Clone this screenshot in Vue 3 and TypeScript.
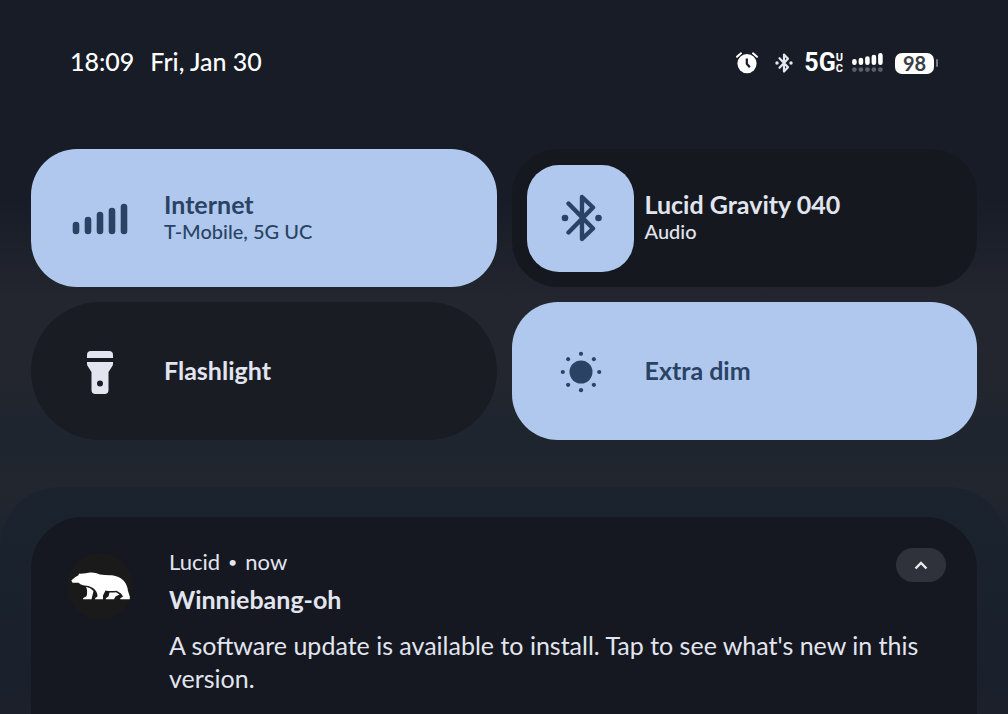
<script setup lang="ts">
import { ref } from 'vue'

interface Tile {
  id: 'internet' | 'bluetooth' | 'flashlight' | 'dim'
  title: string
  detail?: string
  on: boolean
}

const tiles = ref<Tile[]>([
  { id: 'internet', title: 'Internet', detail: 'T-Mobile, 5G UC', on: true },
  { id: 'bluetooth', title: 'Lucid Gravity 040', detail: 'Audio', on: false },
  { id: 'flashlight', title: 'Flashlight', on: false },
  { id: 'dim', title: 'Extra dim', on: true },
])

const rays = [0, 45, 90, 135, 180, 225, 270, 315]
const expanded = ref(true)
</script>

<template>
  <main class="shade">
    <header class="status">
      <div class="clock">
        <time>18:09</time>
        <span>Fri, Jan 30</span>
      </div>
      <div class="indicators">
        <svg class="alarm" width="24" height="24" viewBox="0 0 24 24" aria-label="Alarm set">
          <circle cx="12" cy="12.6" r="9.6" fill="#fff" />
          <path d="M2 5.800 6 2.300M22 5.800 18 2.300" stroke="#fff" stroke-width="2" stroke-linecap="round" />
          <path d="M11.800 7.500v5.300l3 3.400" fill="none" stroke="#171c26" stroke-width="2.200" />
        </svg>
        <svg class="bt" width="18" height="22" viewBox="0 0 18 22" aria-label="Bluetooth connected">
          <path d="M4.500 6.200 13 15.200 9 19.500V2.500l4 4.300-8.500 9" fill="none" stroke="#e6e8ee" stroke-width="2.200" stroke-linejoin="round" stroke-linecap="round" />
          <circle cx="2" cy="11" r="1.700" fill="#e6e8ee" />
          <circle cx="16" cy="11" r="1.700" fill="#e6e8ee" />
        </svg>
        <span class="network"><span class="gen">5G</span><span class="uc"><span>U</span><span>C</span></span></span>
        <svg class="bars" width="31" height="20" viewBox="0 0 31 20" aria-label="Signal strength">
          <path d="M2.400 8.300v1.500M8.900 7v2.800M15.400 5.500v4.300M21.900 4v5.800M28.400 2.400v7.400" stroke="#fff" stroke-width="4.600" stroke-linecap="round" />
          <g fill="#5b5f68">
            <circle v-for="n in 5" :key="n" :cx="2.4 + (n - 1) * 6.5" cy="16.6" r="2.4" />
          </g>
        </svg>
        <span class="battery">98</span>
      </div>
    </header>

    <section class="tiles" aria-label="Quick settings">
      <button
        v-for="tile in tiles"
        :key="tile.id"
        type="button"
        class="tile"
        :class="[tile.id, { on: tile.on }]"
        :aria-pressed="tile.on"
      >
        <span class="icon">
          <svg v-if="tile.id === 'internet'" width="56" height="34" viewBox="0 0 56 34" aria-hidden="true">
            <path d="M4 24v6M16 19v11M28 14v16M40 10v20M52 6v24" stroke="currentColor" stroke-width="6.600" stroke-linecap="round" />
          </svg>
          <svg v-else-if="tile.id === 'bluetooth'" width="44" height="48" viewBox="0 0 44 48" aria-hidden="true">
            <path d="M10.500 9.500 35 34.500 24 45V3L35 13.500 10.500 38.500" fill="none" stroke="currentColor" stroke-width="4.400" stroke-linejoin="round" stroke-linecap="round" />
            <circle cx="7" cy="24" r="3.300" fill="currentColor" />
            <circle cx="40.500" cy="24" r="3.300" fill="currentColor" />
          </svg>
          <svg v-else-if="tile.id === 'flashlight'" width="26" height="45" viewBox="0 -2 26 45" aria-hidden="true">
            <path d="M0 7V4a4 4 0 0 1 4-4h18a4 4 0 0 1 4 4v3z" fill="currentColor" />
            <path fill-rule="evenodd" d="M0 11h26v2q0 1-.6 2L21.500 21v18a4 4 0 0 1-4 4h-9a4 4 0 0 1-4-4V21L.6 15Q0 14 0 13zM13 29.500a3 3 0 1 0 0 6 3 3 0 0 0 0-6z" fill="currentColor" />
          </svg>
          <svg v-else width="43" height="43" viewBox="-22 -22 43 43" aria-hidden="true">
            <circle r="11.500" fill="currentColor" />
            <circle v-for="a in rays" :key="a" cy="-18.200" r="2.100" :transform="`rotate(${a})`" fill="currentColor" />
          </svg>
        </span>
        <span class="label">
          <span class="title">{{ tile.title }}</span>
          <span v-if="tile.detail" class="detail">{{ tile.detail }}</span>
        </span>
      </button>
    </section>

    <section class="drawer" aria-label="Notifications">
      <article class="note">
        <span class="avatar">
          <svg width="60" height="30" viewBox="0 0 60 30" aria-hidden="true">
            <g fill="#fff">
              <path d="M1.300 9.500 5 6.200 8.500 4.200Q8.600 1.800 10.800 2.800Q16 2.400 20 1.500Q25 1 30 3.500Q36 4.400 42 4.200Q49 5 53.500 9.500Q57.500 14 58 20L59.800 25.500V28.300H50.200L50.500 27 53 25.800Q52 22.500 46.500 19.800Q40 20.500 35.500 19.500L33 24.500V28.300H25L25.300 27 27.500 25.500Q27.500 20 23 17Q19 14.300 13 14.200Q10 13.500 8.500 11.800L2.500 11.800Z" />
              <path d="M16 15.800Q20.500 16.500 23.500 20L21.500 28.300H13L13.300 27 16.500 25.200Q18 20 16 15.800Z" />
              <path d="M39.500 21.500Q43.500 21.800 46 21.200L49.500 23.500 45.500 25.500 44 28.300H35.800L36 27 38.500 25.500Z" />
            </g>
          </svg>
        </span>
        <div class="body">
          <p class="meta"><span>Lucid</span><span class="dot">•</span><time>now</time></p>
          <h2>Winniebang-oh</h2>
          <p class="text">A software update is available to install. Tap to see what's new in this version.</p>
        </div>
        <button type="button" class="collapse" aria-label="Collapse" :aria-expanded="expanded" @click="expanded = !expanded">
          <svg width="14" height="9" viewBox="0 0 14 9" aria-hidden="true">
            <path d="M1.500 7.500 7 2l5.500 5.500" fill="none" stroke="#e8eaf0" stroke-width="2.400" />
          </svg>
        </button>
      </article>
    </section>
  </main>
</template>

<style>
body {
  margin: 0;
  background: #171c26;
}
</style>

<style scoped>
.shade {
  box-sizing: border-box;
  min-height: 100vh;
  display: flex;
  flex-direction: column;
  overflow: hidden;
  font-family: Lato, "Open Sans", sans-serif;
  color: #e2e5ef;
  background: linear-gradient(#171c26 0, #171c26 200px, #23262f 300px, #23262f 370px, #1e252e 440px, #22262f 485px, #1c242e 560px);
}
.status {
  display: flex;
  justify-content: space-between;
  align-items: center;
  height: 28px;
  padding: 48px 70px 0;
  color: #fff;
}
.clock {
  display: flex;
  gap: 16px;
  padding-bottom: 2px;
  font-size: 25px;
  line-height: 28px;
  font-weight: 500;
}
.indicators {
  display: flex;
  align-items: center;
  padding-top: 2px;
}
.bt {
  margin-left: 16px;
}
.network {
  display: flex;
  align-items: center;
  margin-left: 11px;
}
.gen {
  font: 700 25px/24px Roboto, sans-serif;
}
.uc {
  display: flex;
  flex-direction: column;
  font: 700 11px/11px Roboto, sans-serif;
}
.bars {
  margin-left: 9px;
}
.battery {
  position: relative;
  width: 39px;
  margin: 0 4px 0 12px;
  border-radius: 7px;
  background: #fff;
  color: #3a3d44;
  font-size: 20px;
  line-height: 21px;
  font-weight: 700;
  text-align: center;
}
.battery::after {
  content: "";
  position: absolute;
  right: -4px;
  top: 6px;
  width: 2px;
  height: 8px;
  border-radius: 1px;
  background: #777b84;
}
.tiles {
  display: grid;
  grid-template-columns: 1fr 1fr;
  gap: 15px;
  padding: 73px 31px 0;
}
.tile {
  display: flex;
  align-items: center;
  height: 138px;
  padding: 0 15px;
  border: 0;
  border-radius: 69px;
  background: #191c23;
  color: #e2e5ef;
  font-family: inherit;
  text-align: left;
}
.tile.on {
  border-radius: 46px;
  background: #b0c8ed;
  color: #2a4365;
}
.tile.bluetooth {
  border-radius: 46px;
  background: #15191f;
}
.icon {
  display: flex;
  align-items: center;
  justify-content: center;
  width: 107px;
  height: 107px;
  border-radius: 32px;
}
.bluetooth .icon {
  background: #b0c8ed;
  color: #2a4365;
}
.label {
  display: flex;
  flex-direction: column;
  margin-left: 11px;
  padding-bottom: 2px;
}
.title {
  font-size: 25px;
  line-height: 28px;
  font-weight: 700;
}
.detail {
  font-size: 20px;
  line-height: 26px;
  font-weight: 500;
}
.drawer {
  flex: 1;
  display: flex;
  margin-top: 47px;
  padding: 30px 31px 0;
  border-radius: 60px 60px 0 0;
  background: linear-gradient(#1b232e, #19222d 80px, #1b202b);
}
.note {
  flex: 1;
  display: flex;
  align-items: flex-start;
  padding: 31px 31px 18px 36px;
  border-radius: 52px 52px 0 0;
  background: #151820;
}
.avatar {
  display: flex;
  align-items: center;
  justify-content: center;
  width: 66px;
  height: 66px;
  margin-top: 5px;
  border-radius: 50%;
  background: #1a1a1b;
}
.body {
  flex: 1;
  margin-left: 36px;
  margin-right: -50px;
}
.meta {
  display: flex;
  gap: 8px;
  margin: 0;
  font-size: 22px;
  line-height: 28px;
}
.dot {
  font-size: 16px;
}
h2 {
  margin: 7px 0 14px;
  font-size: 25px;
  line-height: 32px;
  font-weight: 700;
}
.text {
  margin: 0;
  padding-right: 20px;
  font-size: 25px;
  line-height: 33px;
}
.collapse {
  display: flex;
  align-items: center;
  justify-content: center;
  width: 50px;
  height: 34px;
  padding: 0;
  border: 0;
  border-radius: 17px;
  background: #30323b;
}
</style>
